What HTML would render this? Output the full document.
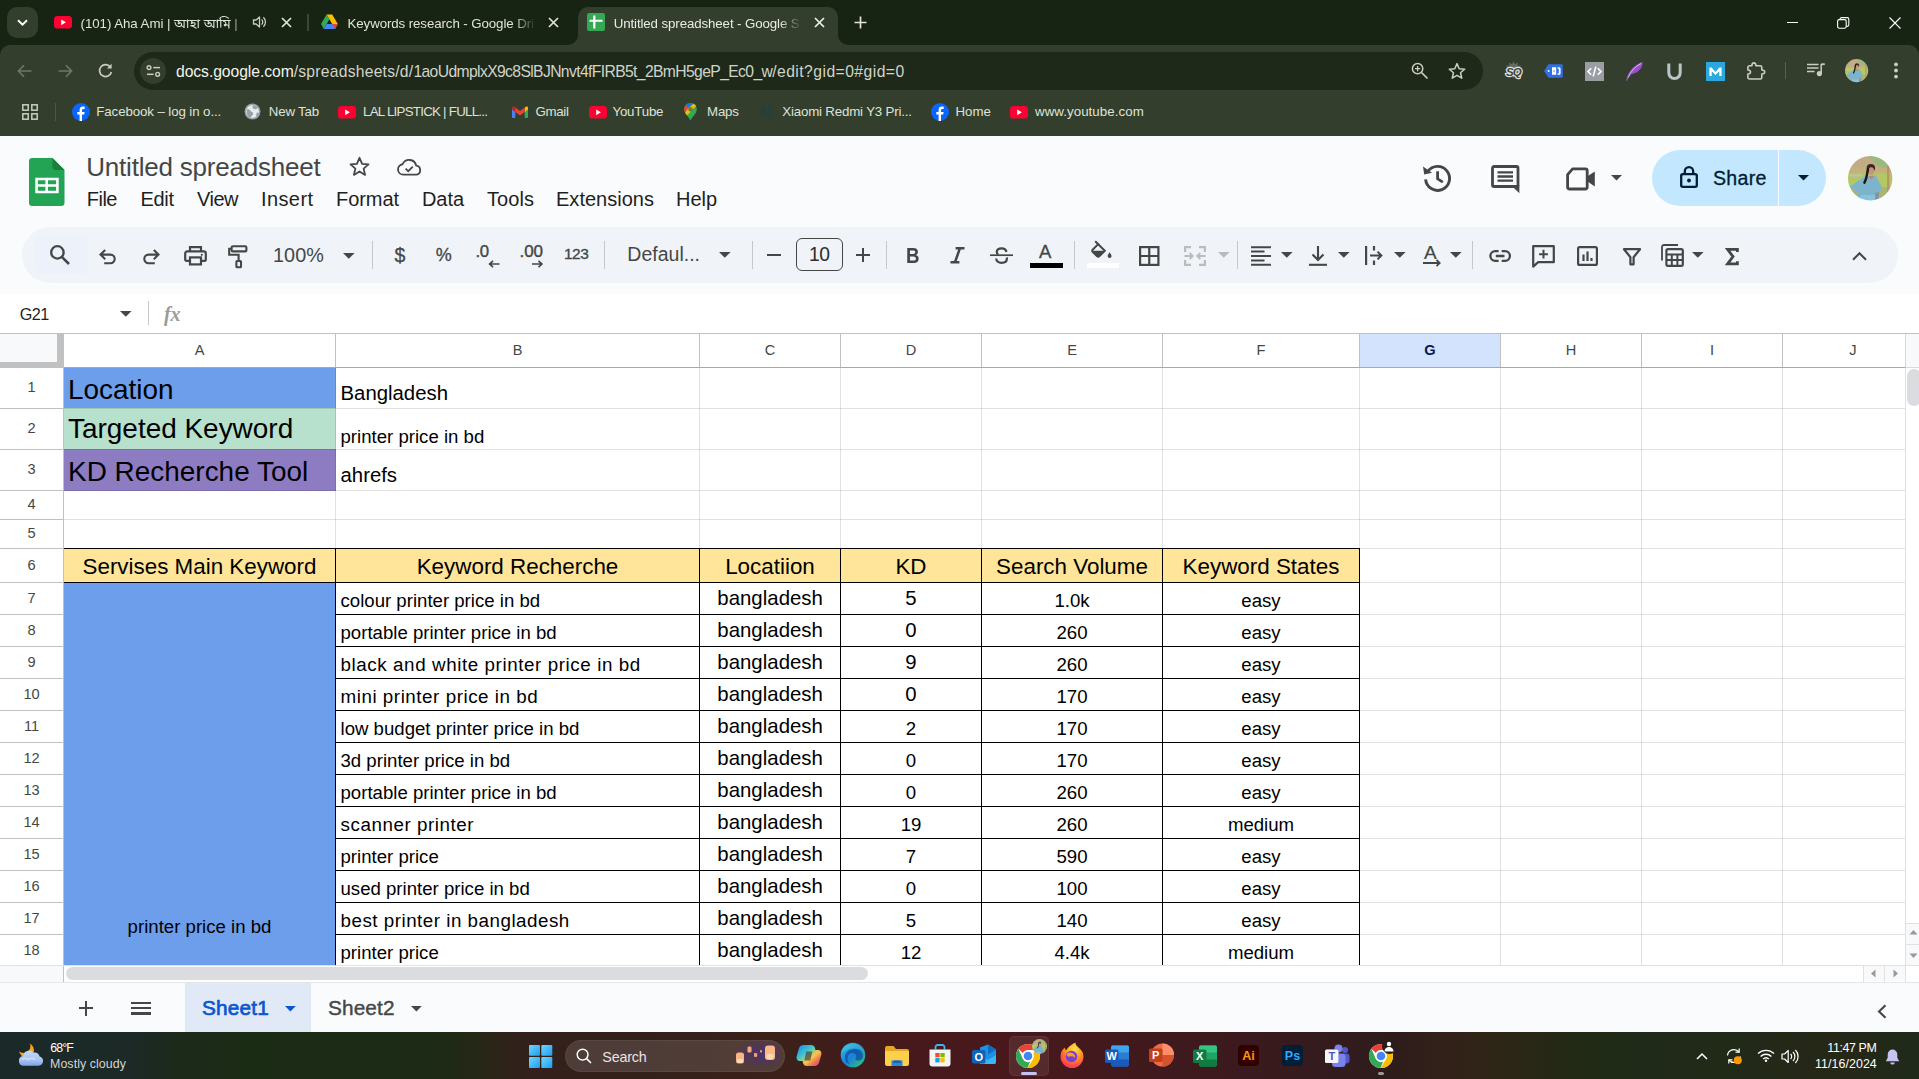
<!DOCTYPE html>
<html lang="en"><head><meta charset="utf-8"><title>Untitled spreadsheet - Google Sheets</title>
<style>
html,body{margin:0;padding:0;}
body{width:1919px;height:1079px;overflow:hidden;position:relative;background:#fff;font-family:"Liberation Sans",sans-serif;color:#000;}
.t{position:absolute;white-space:nowrap;font-family:"Liberation Sans",sans-serif;}
.b{position:absolute;display:block;}
svg{overflow:visible;}
</style></head><body>
<div id="chrome">
<div class="b" style="left:0px;top:0px;width:1919px;height:136px;background:#182413;"></div>
<div class="b" style="left:0px;top:45px;width:1919px;height:91px;background:#343e2d;border-radius:10px 10px 0 0;"></div>
<div class="b" style="left:7px;top:7px;width:31px;height:31px;background:#343e2d;border-radius:10px;"></div>
<svg class="b" style="left:16px;top:17px;" width="13" height="11" viewBox="0 0 13 11"><path d="M2 3.2L6.5 7.7L11 3.2" fill="none" stroke="#fff" stroke-width="2"/></svg>
<svg class="b" style="left:54px;top:15.5px;" width="18" height="12.6" viewBox="0 0 18 12.6"><rect x="0" y="0" width="18" height="12.6" rx="3.4" fill="#ff0033"/><path d="M7.2 3.4L11.9 6.3L7.2 9.2Z" fill="#fff"/></svg>
<div class="t" style="left:80.5px;top:15.00px;font-size:13.3px;line-height:17px;color:#dfe3d9;width:162px;overflow:hidden;letter-spacing:-0.05px;-webkit-mask-image:linear-gradient(90deg,#000 93%,transparent 100%);font-family:'Liberation Sans','Noto Sans Bengali',sans-serif;">(101) Aha Ami | আহা আমি |</div>
<svg class="b" style="left:252px;top:15px;" width="15" height="14" viewBox="0 0 15 14"><path d="M1.5 5h2.6l3.4-3v10l-3.4-3H1.5z" fill="none" stroke="#c9cec3" stroke-width="1.3" stroke-linejoin="round"/><path d="M9.6 4.4a3.6 3.6 0 0 1 0 5.2M11.4 2.3a6.4 6.4 0 0 1 0 9.4" fill="none" stroke="#c9cec3" stroke-width="1.3"/></svg>
<svg class="b" style="left:280.5px;top:17px;" width="11" height="11" viewBox="0 0 11 11"><path d="M1 1L10 10M10 1L1 10" stroke="#dfe3d9" stroke-width="1.7" fill="none"/></svg>
<div class="b" style="left:306.5px;top:14px;width:2px;height:17px;background:#3b4637;"></div>
<svg class="b" style="left:320.5px;top:14.3px;" width="17" height="15.2" viewBox="0 0 17 15.2"><path d="M5.6 0.5h5.6l5.6 9.6h-5.6z" fill="#fbbc04"/><path d="M5.6 0.5L0 10.1l2.8 4.8 5.6-9.6z" fill="#34a853"/><path d="M2.8 14.9h11.2l2.8-4.8H5.6z" fill="#4285f4"/><path d="M14 14.9l2.8-4.8h-5.6z" fill="#ea4335"/></svg>
<div class="t" style="left:347.5px;top:15.00px;font-size:13.3px;line-height:17px;color:#dfe3d9;letter-spacing:-0.094px;width:188px;overflow:hidden;-webkit-mask-image:linear-gradient(90deg,#000 88%,transparent 100%);">Keywords research - Google Dri</div>
<svg class="b" style="left:547.5px;top:17px;" width="11" height="11" viewBox="0 0 11 11"><path d="M1 1L10 10M10 1L1 10" stroke="#dfe3d9" stroke-width="1.7" fill="none"/></svg>
<div class="b" style="left:578px;top:7px;width:260px;height:40px;background:#343e2d;border-radius:10px 10px 0 0;"></div>
<svg class="b" style="left:568px;top:35px;" width="10" height="10" viewBox="0 0 10 10"><path d="M10 0V10H0A10 10 0 0 0 10 0Z" fill="#343e2d"/></svg>
<svg class="b" style="left:838px;top:35px;" width="10" height="10" viewBox="0 0 10 10"><path d="M0 0V10H10A10 10 0 0 1 0 0Z" fill="#343e2d"/></svg>
<svg class="b" style="left:587px;top:13px;" width="18" height="18" viewBox="0 0 18 18"><rect width="18" height="18" rx="2" fill="#34a853"/><path d="M6.2 2.5h2.2v4.2H15.5v2.1H8.4v6.7H6.2V8.8H2.5V6.7h3.7z" fill="#fff"/></svg>
<div class="t" style="left:613.7px;top:15.00px;font-size:13.3px;line-height:17px;color:#e9ecE4;letter-spacing:-0.109px;width:188px;overflow:hidden;-webkit-mask-image:linear-gradient(90deg,#000 88%,transparent 100%);">Untitled spreadsheet - Google S</div>
<svg class="b" style="left:814.3px;top:17px;" width="11" height="11" viewBox="0 0 11 11"><path d="M1 1L10 10M10 1L1 10" stroke="#eef0ea" stroke-width="1.7" fill="none"/></svg>
<svg class="b" style="left:853.5px;top:16px;" width="13" height="13" viewBox="0 0 13 13"><path d="M6.5 0.5v12M0.5 6.5h12" stroke="#dfe3d9" stroke-width="1.7" fill="none"/></svg>
<div class="b" style="left:1787px;top:22px;width:11px;height:1px;background:#fff;"></div>
<svg class="b" style="left:1837px;top:16.5px;" width="12.5" height="12" viewBox="0 0 12.5 12"><rect x="0.6" y="2.6" width="8.6" height="8.6" rx="1.6" fill="none" stroke="#fff" stroke-width="1.1"/><path d="M3 2.4V2.2A1.6 1.6 0 0 1 4.6 0.6h5.6a1.6 1.6 0 0 1 1.6 1.6v5.6a1.6 1.6 0 0 1-1.6 1.6h-0.8" fill="none" stroke="#fff" stroke-width="1.1"/></svg>
<svg class="b" style="left:1889px;top:17px;" width="12" height="12" viewBox="0 0 12 12"><path d="M0.5 0.5L11.5 11.5M11.5 0.5L0.5 11.5" stroke="#fff" stroke-width="1.1" fill="none"/></svg>
<svg class="b" style="left:17px;top:63.5px;" width="15" height="14" viewBox="0 0 15 14"><path d="M14.5 7H1.8M7 1.2L1.4 7L7 12.8" fill="none" stroke="#6d7868" stroke-width="1.6"/></svg>
<svg class="b" style="left:57.5px;top:63.5px;" width="15" height="14" viewBox="0 0 15 14"><path d="M0.5 7H13.2M8 1.2L13.6 7L8 12.8" fill="none" stroke="#6d7868" stroke-width="1.6"/></svg>
<svg class="b" style="left:98px;top:63px;" width="15" height="15" viewBox="0 0 15 15"><path d="M12.6 4.3A6 6 0 1 0 13.4 9" fill="none" stroke="#c9cec3" stroke-width="1.7"/><path d="M13.6 0.8V5.4H9z" fill="#c9cec3"/></svg>
<div class="b" style="left:134px;top:52px;width:1349px;height:38px;background:#1e2919;border-radius:19px;"></div>
<div class="b" style="left:140px;top:58px;width:26px;height:26px;background:#343e2d;border-radius:13px;"></div>
<svg class="b" style="left:145.5px;top:65px;" width="15" height="12" viewBox="0 0 15 12"><circle cx="3" cy="2.6" r="1.9" fill="none" stroke="#c9cec3" stroke-width="1.4"/><path d="M7.3 2.6H14" stroke="#c9cec3" stroke-width="1.5"/><circle cx="11.6" cy="9.3" r="1.9" fill="none" stroke="#c9cec3" stroke-width="1.4"/><path d="M1 9.3H7.6" stroke="#c9cec3" stroke-width="1.5"/></svg>
<div class="t" style="left:176px;top:62.00px;font-size:15.7px;line-height:20px;color:#d0d4ca;"><span style="color:#f1f4ec;letter-spacing:-0.06px">docs.google.com</span><span style="color:#d0d4ca;letter-spacing:0.233px">/spreadsheets/d/</span><span style="color:#d0d4ca;letter-spacing:-0.625px">1aoUdmplxX9c8SlBJNnvt4fFIRB5t_2BmH5geP_Ec0_w</span><span style="color:#d0d4ca;letter-spacing:0.45px">/edit?gid=0#gid=0</span></div>
<svg class="b" style="left:1411px;top:62px;" width="18" height="18" viewBox="0 0 18 18"><circle cx="6.6" cy="6.6" r="5.2" fill="none" stroke="#c9cec3" stroke-width="1.5"/><path d="M10.5 10.5L16.5 16.5" stroke="#c9cec3" stroke-width="1.7"/><path d="M6.6 4v5.2M4 6.6h5.2" stroke="#c9cec3" stroke-width="1.3"/></svg>
<svg class="b" style="left:1447.5px;top:61.5px;" width="18" height="18" viewBox="0 0 18 18"><path d="M9 1.6l2.2 5.1 5.5.5-4.2 3.6 1.3 5.4L9 13.3l-4.8 2.9 1.3-5.4L1.3 7.2l5.5-.5z" fill="none" stroke="#c9cec3" stroke-width="1.5" stroke-linejoin="round"/></svg>
<svg class="b" style="left:1503px;top:61px;" width="21" height="20" viewBox="0 0 21 20"><path d="M10.5 0l1.4 3.2 3-1.8-.3 3.4 3.4-.3-1.8 3 3.2 1.4-3.2 1.4 1.8 3-3.4-.3.3 3.4-3-1.8-1.4 3.2-1.4-3.2-3 1.8.3-3.4-3.4.3 1.8-3L1.6 8.9l3.2-1.4-1.8-3 3.4.3-.3-3.4 3 1.8z" fill="#8a8f86" opacity="0.55"/><text x="10.5" y="15" font-family="Liberation Sans,sans-serif" font-size="11.5" font-weight="bold" font-style="italic" text-anchor="middle" fill="#3c4239" stroke="#e4e6e0" stroke-width="2.4" paint-order="stroke" letter-spacing="-0.8">SQ</text></svg>
<svg class="b" style="left:1544px;top:64px;" width="19" height="14" viewBox="0 0 19 14"><path d="M0 7L4.5 0.3H17.6a1.2 1.2 0 0 1 1.2 1.2v11a1.2 1.2 0 0 1-1.2 1.2H4.5z" fill="#2f6fe4"/><circle cx="4.6" cy="7" r="1" fill="#fff"/><path d="M8 3.2h4.2v7.6H8zM9.6 6.3h1v1.4h-1z" fill="#fff" fill-rule="evenodd"/><path d="M13.6 3.2h1.4a1.6 1.6 0 0 1 1.6 1.6v4.4a1.6 1.6 0 0 1-1.6 1.6h-1.4v-1.5h1.2V4.7h-1.2z" fill="#fff"/></svg>
<svg class="b" style="left:1585px;top:62px;" width="19" height="19" viewBox="0 0 19 19"><rect width="19" height="19" fill="#9a9da3"/><path d="M6.2 6.2L3 9.5l3.2 3.3M12.8 6.2L16 9.5l-3.2 3.3M10.8 4.6L8.2 14.4" fill="none" stroke="#fff" stroke-width="1.6"/></svg>
<svg class="b" style="left:1625px;top:61px;" width="19" height="20" viewBox="0 0 19 20"><path d="M1 19.5C3 12 7 5 17.5 0.8C17.8 6 15 11.5 5.5 13.6L2 19.8z" fill="#9b4fd0"/><path d="M3.2 16.5C6 10 10 5.5 16 2.5" stroke="#d9b6f2" stroke-width="1" fill="none"/></svg>
<svg class="b" style="left:1667px;top:63px;" width="15" height="17" viewBox="0 0 15 17"><path d="M1.8 0.5v9.3a5.7 5.7 0 0 0 11.4 0V0.5" fill="none" stroke="#b9c6c8" stroke-width="3"/></svg>
<svg class="b" style="left:1706px;top:62px;" width="19" height="19" viewBox="0 0 19 19"><rect width="19" height="19" fill="#2ba8e0"/><path d="M3.4 14V5.4h2.2l3.9 4.6 3.9-4.6h2.2V14h-2.3V9.2L9.5 13 5.7 9.2V14z" fill="#fff"/></svg>
<svg class="b" style="left:1746px;top:60.5px;" width="20" height="19" viewBox="0 0 20 19"><path d="M3.5 4.8H5.9a2 2.9 0 0 1 4 0H14.2a1.6 1.6 0 0 1 1.6 1.6V9a2.9 2 0 0 1 0 4V16.4a1.6 1.6 0 0 1-1.6 1.6H3.5A1.6 1.6 0 0 1 1.9 16.4V13a2.6 2 0 0 0 0-4V6.4A1.6 1.6 0 0 1 3.5 4.8z" fill="none" stroke="#c9cec3" stroke-width="1.6" stroke-linejoin="round"/></svg>
<div class="b" style="left:1784.5px;top:62px;width:1.5px;height:17px;background:#566151;"></div>
<svg class="b" style="left:1807px;top:63px;" width="18" height="14" viewBox="0 0 18 14"><path d="M0 1.6h11.5M0 5.1h11.5M0 8.6h7.5" stroke="#c9cec3" stroke-width="1.5"/><path d="M14.2 1v9.4" stroke="#c9cec3" stroke-width="1.5"/><path d="M14.2 1.2h3.6" stroke="#c9cec3" stroke-width="1.8"/><circle cx="12.4" cy="10.6" r="2.6" fill="#c9cec3"/></svg>
<svg class="b" style="left:1845px;top:59px;" width="23.2" height="23.2" viewBox="0 0 100 100"><defs><clipPath id="ca1"><circle cx="50" cy="50" r="50"/></clipPath><filter id="fa1" x="-10%" y="-10%" width="120%" height="120%"><feGaussianBlur stdDeviation="1.6"/></filter></defs><g clip-path="url(#ca1)"><g filter="url(#fa1)"><rect x="-5" y="-5" width="110" height="110" fill="#b2c06a"/><rect x="-5" y="-5" width="110" height="38" fill="#c3ab86"/><path d="M40 -5H105V30H75z" fill="#9db87d"/><rect x="-5" y="26" width="110" height="12" fill="#c4b07c"/><rect x="-5" y="38" width="110" height="34" fill="#b3c765"/><rect x="-5" y="70" width="110" height="35" fill="#a9b574"/><rect x="88" y="22" width="5" height="75" fill="#b8936a"/><rect x="2" y="42" width="30" height="4" fill="#c9b8c9"/><path d="M39 45L63 44 76 70 73 78 66 105H24L22 82 4 70 20 58z" fill="#7db3cc"/><path d="M28 88H68L66 105H26z" fill="#86c3e0"/><path d="M62 82H70L68 105H60z" fill="#8d8f96"/><ellipse cx="51.5" cy="27" rx="9.5" ry="9" fill="#3a282b"/><ellipse cx="52.5" cy="34" rx="6.2" ry="8.5" fill="#c8957c"/><path d="M45 30C42 40 44 48 37 60" fill="none" stroke="#1f1718" stroke-width="5.5" stroke-linecap="round"/><path d="M47 45H58L55 52H50z" fill="#b98772"/></g></g></svg>
<svg class="b" style="left:1893px;top:62px;" width="6" height="17" viewBox="0 0 6 17"><circle cx="3" cy="2.4" r="1.9" fill="#c9cec3"/><circle cx="3" cy="8.5" r="1.9" fill="#c9cec3"/><circle cx="3" cy="14.6" r="1.9" fill="#c9cec3"/></svg>
<svg class="b" style="left:21.5px;top:103.5px;" width="16" height="16" viewBox="0 0 16 16"><rect x="0.8" y="0.8" width="5.4" height="5.4" fill="none" stroke="#c9cec3" stroke-width="1.5"/><rect x="9.8" y="0.8" width="5.4" height="5.4" fill="none" stroke="#c9cec3" stroke-width="1.5"/><rect x="0.8" y="9.8" width="5.4" height="5.4" fill="none" stroke="#c9cec3" stroke-width="1.5"/><rect x="9.8" y="9.8" width="5.4" height="5.4" fill="none" stroke="#c9cec3" stroke-width="1.5"/></svg>
<div class="b" style="left:54.5px;top:103px;width:1.5px;height:18px;background:#4b5646;"></div>
<svg class="b" style="left:71.8px;top:103px;" width="18" height="18" viewBox="0 0 18 18"><circle cx="9" cy="9" r="9" fill="#0866ff"/><path d="M10 18v-6.4h2.2l.4-2.6H10V7.4c0-.8.3-1.4 1.5-1.4h1.2V3.7C12.4 3.6 11.7 3.5 10.9 3.5 8.9 3.5 7.6 4.7 7.6 6.9V9H5.3v2.6h2.3V18z" fill="#fff"/></svg>
<div class="t" style="left:96.3px;top:103.00px;font-size:13.3px;line-height:17px;color:#dfe3d9;letter-spacing:-0.103px;">Facebook – log in o...</div>
<svg class="b" style="left:244px;top:103px;" width="17" height="17" viewBox="0 0 17 17"><circle cx="8.5" cy="8.5" r="8" fill="#9aa0a6"/><circle cx="8.5" cy="8.5" r="6.4" fill="#e8eaed"/><path d="M3 6.5c1.5-.5 3 .2 3.6 1.5.5 1 1.8.8 2.4 1.8.5.9-.3 2.2-1.2 2.9-1 .800-1 2-1.6 2.1C3.8 13.8 2 10.8 3 6.5zM9 2.3c1.8-.4 4 .7 5 2.6-1 .2-1.4 1.2-2.6 1.3-1.3.1-2.6-.6-2.9-1.7-.2-.8-.1-1.5.5-2.2zM13 9.5c.8-.3 1.6.1 2 .9-.3 1.5-1.2 2.8-2.4 3.6-.5-1.2-.6-3.6.4-4.5z" fill="#9aa0a6"/></svg>
<div class="t" style="left:268.8px;top:103.00px;font-size:13.3px;line-height:17px;color:#dfe3d9;letter-spacing:-0.184px;">New Tab</div>
<svg class="b" style="left:338px;top:105.5px;" width="18" height="12.6" viewBox="0 0 18 12.6"><rect x="0" y="0" width="18" height="12.6" rx="3.4" fill="#ff0033"/><path d="M7.2 3.4L11.9 6.3L7.2 9.2Z" fill="#fff"/></svg>
<div class="t" style="left:363px;top:103.00px;font-size:13.3px;line-height:17px;color:#dfe3d9;letter-spacing:-0.736px;">LAL LIPSTICK | FULL...</div>
<svg class="b" style="left:512px;top:106px;" width="16" height="12" viewBox="0 0 16 12"><path d="M0 1.8V11a1 1 0 0 0 1 1h2.3V5.6z" fill="#4285f4"/><path d="M12.7 12H15a1 1 0 0 0 1-1V1.8l-3.3 3.8z" fill="#34a853"/><path d="M0 1.8v1.7l3.3 2.5V1.6L2.4.9C1.4.1 0 .8 0 1.8z" fill="#c5221f"/><path d="M16 1.8v1.7l-3.3 2.5V1.6l.9-.7c1-.8 2.4-.1 2.4.9z" fill="#fbbc04"/><path d="M3.3 6V1.6L8 5.1l4.7-3.5V6L8 9.5z" fill="#ea4335"/></svg>
<div class="t" style="left:535.4px;top:103.00px;font-size:13.3px;line-height:17px;color:#dfe3d9;letter-spacing:-0.283px;">Gmail</div>
<svg class="b" style="left:589px;top:105.5px;" width="18" height="12.6" viewBox="0 0 18 12.6"><rect x="0" y="0" width="18" height="12.6" rx="3.4" fill="#ff0033"/><path d="M7.2 3.4L11.9 6.3L7.2 9.2Z" fill="#fff"/></svg>
<div class="t" style="left:612.5px;top:103.00px;font-size:13.3px;line-height:17px;color:#dfe3d9;letter-spacing:-0.211px;">YouTube</div>
<svg class="b" style="left:684px;top:103px;" width="13" height="17.7" viewBox="0 0 13 17.7"><path d="M6.5 0C3 0 .2 2.8.2 6.3c0 4.4 5 7.8 6.3 11.4C7.8 14.1 12.8 10.7 12.8 6.3 12.8 2.8 10 0 6.5 0z" fill="#34a853"/><path d="M6.5 0C4.6 0 2.9.8 1.7 2.2l3 2.5L9.6.7C8.7.3 7.6 0 6.5 0z" fill="#1a73e8"/><path d="M1.7 2.2C.8 3.3.2 4.7.2 6.3c0 1.2.3 2.3.9 3.3l3.6-4.9z" fill="#ea4335"/><path d="M9.6.7L4.7 4.7 1.1 9.6c.5 1 1.2 1.9 2 2.8l9.1-9.3C11.6 2.1 10.7 1.2 9.6.7z" fill="#fbbc04" opacity="0.95"/><circle cx="6.5" cy="6.3" r="2.3" fill="#fff" opacity="0.0"/><circle cx="6.5" cy="6.2" r="2.2" fill="#1a3a6b" opacity="0.55"/></svg>
<div class="t" style="left:707px;top:103.00px;font-size:13.3px;line-height:17px;color:#dfe3d9;letter-spacing:-0.174px;">Maps</div>
<div class="t" style="left:760px;top:100.61px;font-size:17px;line-height:22px;color:#22403f;font-weight:bold;transform:scaleX(0.9);transform-origin:0 0;">M</div>
<div class="t" style="left:782.3px;top:103.00px;font-size:13.3px;line-height:17px;color:#dfe3d9;letter-spacing:-0.183px;">Xiaomi Redmi Y3 Pri...</div>
<svg class="b" style="left:930.8px;top:103px;" width="18" height="18" viewBox="0 0 18 18"><circle cx="9" cy="9" r="9" fill="#0866ff"/><path d="M10 18v-6.4h2.2l.4-2.6H10V7.4c0-.8.3-1.4 1.5-1.4h1.2V3.7C12.4 3.6 11.7 3.5 10.9 3.5 8.9 3.5 7.6 4.7 7.6 6.9V9H5.3v2.6h2.3V18z" fill="#fff"/></svg>
<div class="t" style="left:955.4px;top:103.00px;font-size:13.3px;line-height:17px;color:#dfe3d9;letter-spacing:0.041px;">Home</div>
<svg class="b" style="left:1010px;top:105.5px;" width="18" height="12.6" viewBox="0 0 18 12.6"><rect x="0" y="0" width="18" height="12.6" rx="3.4" fill="#ff0033"/><path d="M7.2 3.4L11.9 6.3L7.2 9.2Z" fill="#fff"/></svg>
<div class="t" style="left:1035px;top:103.00px;font-size:13.3px;line-height:17px;color:#dfe3d9;letter-spacing:0.059px;">www.youtube.com</div>
</div>
<div id="sheets">
<div class="b" style="left:0px;top:136px;width:1919px;height:158px;background:#f9fbfd;"></div>
<div class="b" style="left:0px;top:294px;width:1919px;height:40px;background:#fff;"></div>
<svg class="b" style="left:29.3px;top:158px;" width="35.5" height="48" viewBox="0 0 35.5 48"><path d="M3.2 0H23.5L35.5 12V44.8a3.2 3.2 0 0 1-3.2 3.2H3.2A3.2 3.2 0 0 1 0 44.8V3.2A3.2 3.2 0 0 1 3.2 0z" fill="#23a455"/><path d="M23.5 0L35.5 12H26.5a3 3 0 0 1-3-3z" fill="#16803c"/><path d="M6.3 19.8h23.4v15.4H6.3zM8.9 22.3v3.9h7.5v-3.9zM19 22.3v3.9h8.1v-3.9zM8.9 28.8v3.9h7.5v-3.9zM19 28.8v3.9h8.1v-3.9z" fill="#fff" fill-rule="evenodd"/></svg>
<div class="t" style="left:86.3px;top:150.00px;font-size:26px;line-height:34px;color:#444746;letter-spacing:-0.215px;">Untitled spreadsheet</div>
<svg class="b" style="left:348.5px;top:156px;" width="21" height="20" viewBox="0 0 21 20"><path d="M10.5 1.8l2.6 6 6.4.6-4.9 4.2 1.5 6.3-5.6-3.4-5.6 3.4 1.5-6.3L1.5 8.4l6.4-.6z" fill="none" stroke="#444746" stroke-width="1.8" stroke-linejoin="round"/></svg>
<svg class="b" style="left:397px;top:159px;" width="25" height="17" viewBox="0 0 25 17"><path d="M6.2 15.6a5.2 5.2 0 0 1-.6-10.36A7.2 7.2 0 0 1 19.2 6.6a4.6 4.6 0 0 1 .6 9z" fill="none" stroke="#444746" stroke-width="1.8" stroke-linejoin="round"/><path d="M8.6 9.6l2.6 2.6 4.6-4.6" fill="none" stroke="#444746" stroke-width="1.7"/></svg>
<div class="t" style="left:86.8px;top:186.00px;font-size:20px;line-height:26px;color:#1f1f1f;letter-spacing:-0.509px;">File</div>
<div class="t" style="left:140.5px;top:186.00px;font-size:20px;line-height:26px;color:#1f1f1f;letter-spacing:-0.321px;">Edit</div>
<div class="t" style="left:197px;top:186.00px;font-size:20px;line-height:26px;color:#1f1f1f;letter-spacing:-0.496px;">View</div>
<div class="t" style="left:261px;top:186.00px;font-size:20px;line-height:26px;color:#1f1f1f;letter-spacing:0.396px;">Insert</div>
<div class="t" style="left:336px;top:186.00px;font-size:20px;line-height:26px;color:#1f1f1f;letter-spacing:-0.068px;">Format</div>
<div class="t" style="left:422px;top:186.00px;font-size:20px;line-height:26px;color:#1f1f1f;letter-spacing:-0.082px;">Data</div>
<div class="t" style="left:487px;top:186.00px;font-size:20px;line-height:26px;color:#1f1f1f;letter-spacing:0.078px;">Tools</div>
<div class="t" style="left:556px;top:186.00px;font-size:20px;line-height:26px;color:#1f1f1f;letter-spacing:0.019px;">Extensions</div>
<div class="t" style="left:676px;top:186.00px;font-size:20px;line-height:26px;color:#1f1f1f;letter-spacing:-0.044px;">Help</div>
<svg class="b" style="left:1421.5px;top:162.5px;" width="31" height="30.5" viewBox="0 0 31 30.5"><path d="M5.8 8.4A12 12 0 1 1 3.6 16.4" fill="none" stroke="#444746" stroke-width="2.9"/><path d="M1 3.4l1.2 8.2 7.8-1.9z" fill="#444746"/><path d="M15.6 8.2v7.6l5.2 3.4" fill="none" stroke="#444746" stroke-width="2.8"/></svg>
<svg class="b" style="left:1491px;top:164.5px;" width="29" height="29" viewBox="0 0 29 29"><path d="M1.5 3A1.5 1.5 0 0 1 3 1.5H25.5A1.5 1.5 0 0 1 27 3V20A1.5 1.5 0 0 1 25.5 21.5H3A1.5 1.5 0 0 1 1.5 20z" fill="none" stroke="#444746" stroke-width="2.8"/><path d="M28.4 20v8.2l-7.8-7.4z" fill="#444746"/><path d="M6.5 7.4h15.5M6.5 11.5h15.5M6.5 15.6h15.5" stroke="#444746" stroke-width="2.4"/></svg>
<svg class="b" style="left:1566px;top:166.5px;" width="31" height="24" viewBox="0 0 31 24"><path d="M1.6 7.6L6.6 1.8H19.4a1.8 1.8 0 0 1 1.8 1.8V20.2a1.8 1.8 0 0 1-1.8 1.8H3.4a1.8 1.8 0 0 1-1.8-1.8z" fill="none" stroke="#444746" stroke-width="2.8" stroke-linejoin="round"/><path d="M21.2 9.6L28.8 4.4V19.4L21.2 14.2z" fill="#444746"/></svg>
<svg class="b" style="left:1610.5px;top:174.5px;" width="11" height="6" viewBox="0 0 11 6"><path d="M0 0H11L5.5 5.5z" fill="#444746"/></svg>
<div class="b" style="left:1652px;top:150px;width:174px;height:56px;background:#c2e7ff;border-radius:28px;"></div>
<div class="b" style="left:1778px;top:150px;width:1px;height:56px;background:#f9fbfd;"></div>
<svg class="b" style="left:1680px;top:166px;" width="18" height="22" viewBox="0 0 18 22"><rect x="1.2" y="8.2" width="15.6" height="12.6" rx="1.6" fill="none" stroke="#001d35" stroke-width="2.3"/><path d="M4.8 8V5.4a4.2 4.2 0 0 1 8.4 0V8" fill="none" stroke="#001d35" stroke-width="2.3"/><circle cx="9" cy="14.5" r="1.9" fill="#001d35"/></svg>
<div class="t" style="left:1713px;top:165.71px;font-size:19.6px;line-height:25px;color:#001d35;letter-spacing:0.299px;-webkit-text-stroke:0.3px #001d35;">Share</div>
<svg class="b" style="left:1798px;top:174.5px;" width="11" height="6" viewBox="0 0 11 6"><path d="M0 0H11L5.5 5.5z" fill="#001d35"/></svg>
<svg class="b" style="left:1848.3px;top:155.8px;" width="44.4" height="44.4" viewBox="0 0 100 100"><defs><clipPath id="ca2"><circle cx="50" cy="50" r="50"/></clipPath><filter id="fa2" x="-10%" y="-10%" width="120%" height="120%"><feGaussianBlur stdDeviation="1.6"/></filter></defs><g clip-path="url(#ca2)"><g filter="url(#fa2)"><rect x="-5" y="-5" width="110" height="110" fill="#b2c06a"/><rect x="-5" y="-5" width="110" height="38" fill="#c3ab86"/><path d="M40 -5H105V30H75z" fill="#9db87d"/><rect x="-5" y="26" width="110" height="12" fill="#c4b07c"/><rect x="-5" y="38" width="110" height="34" fill="#b3c765"/><rect x="-5" y="70" width="110" height="35" fill="#a9b574"/><rect x="88" y="22" width="5" height="75" fill="#b8936a"/><rect x="2" y="42" width="30" height="4" fill="#c9b8c9"/><path d="M39 45L63 44 76 70 73 78 66 105H24L22 82 4 70 20 58z" fill="#7db3cc"/><path d="M28 88H68L66 105H26z" fill="#86c3e0"/><path d="M62 82H70L68 105H60z" fill="#8d8f96"/><ellipse cx="51.5" cy="27" rx="9.5" ry="9" fill="#3a282b"/><ellipse cx="52.5" cy="34" rx="6.2" ry="8.5" fill="#c8957c"/><path d="M45 30C42 40 44 48 37 60" fill="none" stroke="#1f1718" stroke-width="5.5" stroke-linecap="round"/><path d="M47 45H58L55 52H50z" fill="#b98772"/></g></g></svg>
<div class="b" style="left:22px;top:227px;width:1876px;height:56px;background:#f0f4f9;border-radius:28px;"></div>
<div class="b" style="left:34.5px;top:235px;width:53px;height:39px;background:#edf2fa;border-radius:4px;"></div>
<svg class="b" style="left:50px;top:245px;" width="20" height="19.5" viewBox="0 0 20 19.5"><circle cx="7.4" cy="7.4" r="6.2" fill="none" stroke="#444746" stroke-width="2.3"/><path d="M11.8 11.8L19 19" stroke="#444746" stroke-width="2.5"/></svg>
<svg class="b" style="left:98.5px;top:249px;" width="18" height="16" viewBox="0 0 18 16"><path d="M6.2 1L1.5 5.6 6.2 10.2M2 5.6H11.4a4.3 4.3 0 0 1 0 8.6H5.2" fill="none" stroke="#444746" stroke-width="2.1"/></svg>
<svg class="b" style="left:141.5px;top:249px;transform:scaleX(-1);" width="18" height="16" viewBox="0 0 18 16"><path d="M6.2 1L1.5 5.6 6.2 10.2M2 5.6H11.4a4.3 4.3 0 0 1 0 8.6H5.2" fill="none" stroke="#444746" stroke-width="2.1"/></svg>
<svg class="b" style="left:184px;top:246px;" width="23" height="19.5" viewBox="0 0 23 19.5"><path d="M6 5.2V1.2H17V5.2" fill="none" stroke="#444746" stroke-width="2.2"/><path d="M5.6 14.8H2.6a1.4 1.4 0 0 1-1.4-1.4V7.4A2 2 0 0 1 3.2 5.4H19.8a2 2 0 0 1 2 2v6a1.4 1.4 0 0 1-1.4 1.4H17.4" fill="none" stroke="#444746" stroke-width="2.2"/><rect x="6" y="11.4" width="11" height="7" fill="none" stroke="#444746" stroke-width="2.2"/><circle cx="17.8" cy="8.8" r="1.1" fill="#444746"/></svg>
<svg class="b" style="left:228px;top:245px;" width="20" height="23.5" viewBox="0 0 20 23.5"><rect x="3.6" y="1.2" width="14.8" height="5.2" rx="1.2" fill="none" stroke="#444746" stroke-width="2.1"/><path d="M3.6 3.8H1.2V9.8H10.6V16" fill="none" stroke="#444746" stroke-width="2.1"/><rect x="8.4" y="16" width="4.6" height="6.3" rx="0.8" fill="none" stroke="#444746" stroke-width="2.1"/></svg>
<div class="t" style="left:273px;top:242.14px;font-size:19.8px;line-height:26px;color:#444746;letter-spacing:0.12px;">100%</div>
<svg class="b" style="left:343.4px;top:252.5px;" width="11.6" height="5.8" viewBox="0 0 11.6 5.8"><path d="M0 0H11.6L5.8 5.8z" fill="#444746"/></svg>
<div class="b" style="left:372px;top:241px;width:1px;height:28px;background:#c7c7c7;"></div>
<div class="b" style="left:604px;top:241px;width:1px;height:28px;background:#c7c7c7;"></div>
<div class="b" style="left:752px;top:241px;width:1px;height:28px;background:#c7c7c7;"></div>
<div class="b" style="left:886px;top:241px;width:1px;height:28px;background:#c7c7c7;"></div>
<div class="b" style="left:1074px;top:241px;width:1px;height:28px;background:#c7c7c7;"></div>
<div class="b" style="left:1237px;top:241px;width:1px;height:28px;background:#c7c7c7;"></div>
<div class="b" style="left:1472px;top:241px;width:1px;height:28px;background:#c7c7c7;"></div>
<div class="t" style="left:394.6px;top:242.74px;font-size:19.5px;line-height:25px;color:#444746;-webkit-text-stroke:0.3px #444746;">$</div>
<div class="t" style="left:435.8px;top:244.26px;font-size:18px;line-height:23px;color:#444746;letter-spacing:-0.505px;-webkit-text-stroke:0.3px #444746;">%</div>
<div class="t" style="left:475.5px;top:241.18px;font-size:16.8px;line-height:22px;color:#444746;letter-spacing:-0.511px;-webkit-text-stroke:0.4px #444746;">.0</div>
<svg class="b" style="left:487.5px;top:259.5px;" width="11.5" height="8" viewBox="0 0 11.5 8"><path d="M11.5 4H1.8M5 0.8L1.6 4 5 7.2" fill="none" stroke="#444746" stroke-width="1.7"/></svg>
<div class="t" style="left:519.5px;top:241.11px;font-size:17px;line-height:22px;color:#444746;letter-spacing:-0.066px;-webkit-text-stroke:0.4px #444746;">.00</div>
<svg class="b" style="left:531.5px;top:259.5px;" width="11.5" height="8" viewBox="0 0 11.5 8"><path d="M0 4H9.7M6.5 0.8L9.9 4 6.5 7.2" fill="none" stroke="#444746" stroke-width="1.7"/></svg>
<div class="t" style="left:564px;top:244.23px;font-size:15.5px;line-height:20px;color:#444746;letter-spacing:-0.531px;-webkit-text-stroke:0.35px #444746;">123</div>
<div class="t" style="left:627.3px;top:241.54px;font-size:19.5px;line-height:25px;color:#444746;letter-spacing:0.01px;">Defaul...</div>
<svg class="b" style="left:719.4px;top:251.5px;" width="11.6" height="5.8" viewBox="0 0 11.6 5.8"><path d="M0 0H11.6L5.8 5.8z" fill="#444746"/></svg>
<div class="b" style="left:767px;top:253.5px;width:14px;height:2px;background:#444746;"></div>
<div class="b" style="left:796px;top:238px;width:46.5px;height:32.5px;background:transparent;border:1.2px solid #444746;border-radius:6px;box-sizing:border-box;"></div>
<div class="t" style="left:796px;top:242.41px;font-size:19.3px;line-height:25px;width:46.5px;text-align:center;color:#2d2f2e;letter-spacing:-0.5px;">10</div>
<div class="b" style="left:855.5px;top:253.5px;width:14px;height:2px;background:#444746;"></div>
<div class="b" style="left:861.5px;top:247.5px;width:2px;height:14px;background:#444746;"></div>
<div class="t" style="left:906.3px;top:240.1px;font-size:22.8px;line-height:30px;color:#444746;font-weight:bold;transform:scaleX(0.82);transform-origin:0 50%;">B</div>
<svg class="b" style="left:949.5px;top:247px;" width="15" height="16.5" viewBox="0 0 15 16.5"><path d="M5.6 1.3H14.5M0.5 15.2H9.4M9.9 1.3L5 15.2" fill="none" stroke="#444746" stroke-width="2.5"/></svg>
<svg class="b" style="left:989.5px;top:246.5px;" width="23" height="17" viewBox="0 0 23 17"><path d="M0 8.2H23" stroke="#444746" stroke-width="1.7"/><path d="M16.4 5a4.9 4 0 0 0-9.7-.2c0 1.3.6 2.2 1.6 2.7M6.2 11.6c0 2.4 2.3 4.2 5.4 4.2 3.2 0 5.3-1.7 5.3-4.1 0-.5-.1-.9-.3-1.3" fill="none" stroke="#444746" stroke-width="2.2"/></svg>
<div class="t" style="left:1039px;top:240.09px;font-size:18.5px;line-height:24px;color:#444746;letter-spacing:0.661px;-webkit-text-stroke:0.3px #444746;">A</div>
<div class="b" style="left:1030px;top:263px;width:33px;height:5px;background:#000;"></div>
<div class="b" style="left:1074px;top:241px;width:1px;height:28px;background:#c7c7c7;"></div>
<svg class="b" style="left:1091px;top:239.5px;" width="22" height="19.5" viewBox="0 0 22 19.5"><path d="M4.2 1.2L13.8 10.8 8.2 16.4a1.4 1.4 0 0 1-2 0L1.6 11.8a1.4 1.4 0 0 1 0-2L8 3.4" fill="none" stroke="#444746" stroke-width="2"/><path d="M1.4 10.8H13.8L8.2 16.4a1.4 1.4 0 0 1-2 0z" fill="#444746"/><path d="M18.6 12.2c1.2 1.7 2 2.9 2 3.9a2 2 0 0 1-4 0c0-1 .8-2.2 2-3.9z" fill="#444746"/></svg>
<div class="b" style="left:1087px;top:263px;width:32px;height:5px;background:#fff;"></div>
<svg class="b" style="left:1138.5px;top:245.5px;" width="20.5" height="20" viewBox="0 0 20.5 20"><rect x="1.1" y="1.1" width="18.3" height="17.8" fill="none" stroke="#444746" stroke-width="2.2"/><path d="M10.25 1V19M1 10H19.5" stroke="#444746" stroke-width="2.2"/></svg>
<svg class="b" style="left:1184px;top:245.5px;" width="22" height="20" viewBox="0 0 22 20"><path d="M1.1 6V1.1H7M15 1.1H20.9V6M20.9 14V18.9H15M7 18.9H1.1V14" fill="none" stroke="#b9bcbb" stroke-width="2.2"/><path d="M0.5 10H8.5M5.6 6.8L8.8 10 5.6 13.2M21.5 10H13.5M16.4 6.8L13.2 10 16.4 13.2" fill="none" stroke="#b9bcbb" stroke-width="1.8"/></svg>
<svg class="b" style="left:1218px;top:251.5px;" width="11.6" height="5.8" viewBox="0 0 11.6 5.8"><path d="M0 0H11.6L5.8 5.8z" fill="#b9bcbb"/></svg>
<svg class="b" style="left:1251px;top:245.5px;" width="20" height="20" viewBox="0 0 20 20"><path d="M0 1.2H20M0 5.6H13.5M0 10H20M0 14.4H13.5M0 18.8H20" stroke="#444746" stroke-width="2"/></svg>
<svg class="b" style="left:1280.6px;top:251.5px;" width="11.6" height="5.8" viewBox="0 0 11.6 5.8"><path d="M0 0H11.6L5.8 5.8z" fill="#444746"/></svg>
<svg class="b" style="left:1309px;top:245.5px;" width="18" height="20" viewBox="0 0 18 20"><path d="M9 0V13.5M3.5 8.4L9 13.9 14.5 8.4" fill="none" stroke="#444746" stroke-width="2.1"/><path d="M0 18.8H18" stroke="#444746" stroke-width="2.1"/></svg>
<svg class="b" style="left:1337.5px;top:251.5px;" width="11.6" height="5.8" viewBox="0 0 11.6 5.8"><path d="M0 0H11.6L5.8 5.8z" fill="#444746"/></svg>
<svg class="b" style="left:1365px;top:246px;" width="18" height="19" viewBox="0 0 18 19"><path d="M1.1 0V19" stroke="#444746" stroke-width="2.2"/><path d="M9 0V4.5M9 14.5V19" stroke="#444746" stroke-width="2.2"/><path d="M5 9.5H16M12.5 5.6L16.4 9.5 12.5 13.4" fill="none" stroke="#444746" stroke-width="2"/></svg>
<svg class="b" style="left:1393.8px;top:251.5px;" width="11.6" height="5.8" viewBox="0 0 11.6 5.8"><path d="M0 0H11.6L5.8 5.8z" fill="#444746"/></svg>
<div class="t" style="left:1424px;top:240.42px;font-size:19px;line-height:25px;color:#444746;-webkit-text-stroke:0.2px #444746;">A</div>
<svg class="b" style="left:1422.5px;top:258.5px;" width="18.5" height="8" viewBox="0 0 18.5 8"><path d="M0 4H16.5M13.5 0.8L16.7 4 13.5 7.2" fill="none" stroke="#444746" stroke-width="1.8"/></svg>
<svg class="b" style="left:1450.4px;top:251.5px;" width="11.6" height="5.8" viewBox="0 0 11.6 5.8"><path d="M0 0H11.6L5.8 5.8z" fill="#444746"/></svg>
<svg class="b" style="left:1488.5px;top:250px;" width="22.3" height="12" viewBox="0 0 22.3 12"><path d="M9.6 1.2H6.2a4.8 4.8 0 0 0 0 9.6H9.6M12.7 1.2h3.4a4.8 4.8 0 0 1 0 9.6H12.7M6.8 6H15.5" fill="none" stroke="#444746" stroke-width="2.3"/></svg>
<svg class="b" style="left:1532px;top:244.5px;" width="23" height="22.5" viewBox="0 0 23 22.5"><path d="M1.2 1.2H21.8V17.2H6.2L1.2 21.6z" fill="none" stroke="#444746" stroke-width="2.2" stroke-linejoin="round"/><path d="M11.5 4.8V13.6M7.1 9.2H15.9" stroke="#444746" stroke-width="2"/></svg>
<svg class="b" style="left:1577px;top:245.5px;" width="21" height="20" viewBox="0 0 21 20"><rect x="1.1" y="1.1" width="18.8" height="17.8" rx="1.5" fill="none" stroke="#444746" stroke-width="2.2"/><path d="M6.5 15V8.5M10.5 15V5.5M14.5 15V12" stroke="#444746" stroke-width="2.2"/></svg>
<svg class="b" style="left:1623px;top:247.5px;" width="18" height="17.5" viewBox="0 0 18 17.5"><path d="M1 1.2H17L10.6 9.2V16.3H7.4V9.2z" fill="none" stroke="#444746" stroke-width="2.2" stroke-linejoin="round"/></svg>
<svg class="b" style="left:1660.5px;top:244px;" width="23" height="23" viewBox="0 0 23 23"><path d="M1 16.5V3a2 2 0 0 1 2-2H17" fill="none" stroke="#444746" stroke-width="1.8"/><rect x="5.4" y="5.2" width="16.4" height="16.6" rx="1.6" fill="none" stroke="#444746" stroke-width="2.2"/><path d="M5.4 10.4H21.8M5.4 16H21.8M10.8 10.4V21.8M16.4 10.4V21.8" stroke="#444746" stroke-width="2"/></svg>
<svg class="b" style="left:1692px;top:251.5px;" width="11.6" height="5.8" viewBox="0 0 11.6 5.8"><path d="M0 0H11.6L5.8 5.8z" fill="#444746"/></svg>
<svg class="b" style="left:1726.3px;top:247.5px;" width="12.2" height="17.2" viewBox="0 0 12.2 17.2"><path d="M11.4 4V1.4H1.6L7 8.6 1.6 15.8H11.4V13.2" fill="none" stroke="#444746" stroke-width="2.8" stroke-linejoin="miter"/></svg>
<svg class="b" style="left:1852px;top:251px;" width="15" height="10" viewBox="0 0 15 10"><path d="M1 8.8L7.5 2.3 14 8.8" fill="none" stroke="#444746" stroke-width="2.1"/></svg>
<div class="t" style="left:19.8px;top:303.89px;font-size:16.2px;line-height:21px;color:#1f1f1f;letter-spacing:-0.56px;">G21</div>
<svg class="b" style="left:119.7px;top:311px;" width="11.6" height="5.8" viewBox="0 0 11.6 5.8"><path d="M0 0H11.6L5.8 5.8z" fill="#444746"/></svg>
<div class="b" style="left:147.5px;top:301px;width:1px;height:24px;background:#c7c7c7;"></div>
<div class="t" style="left:164px;top:301.07px;font-size:20px;line-height:26px;color:#9a9d9b;font-family:'Liberation Serif',serif;font-style:italic;font-weight:bold;letter-spacing:-0.2px;">fx</div>
</div>
<div id="grid">
<div class="b" style="left:0px;top:334px;width:1919px;height:631px;background:#fff;"></div>
<div class="b" style="left:0px;top:333px;width:1919px;height:1px;background:#c0c0c0;"></div>
<div class="b" style="left:0px;top:334px;width:57px;height:28px;background:#f8f9fa;"></div>
<div class="b" style="left:57px;top:334px;width:7px;height:34px;background:#c1c1c1;"></div>
<div class="b" style="left:0px;top:362px;width:64px;height:6px;background:#c1c1c1;"></div>
<div class="b" style="left:1360px;top:334px;width:140px;height:33px;background:#d3e3fd;"></div>
<div class="b" style="left:64px;top:367px;width:1842px;height:1px;background:#c0c0c0;"></div>
<div class="b" style="left:335px;top:334px;width:1px;height:34px;background:#c0c0c0;"></div>
<div class="b" style="left:699px;top:334px;width:1px;height:34px;background:#c0c0c0;"></div>
<div class="b" style="left:840px;top:334px;width:1px;height:34px;background:#c0c0c0;"></div>
<div class="b" style="left:981px;top:334px;width:1px;height:34px;background:#c0c0c0;"></div>
<div class="b" style="left:1162px;top:334px;width:1px;height:34px;background:#c0c0c0;"></div>
<div class="b" style="left:1359px;top:334px;width:1px;height:34px;background:#c0c0c0;"></div>
<div class="b" style="left:1500px;top:334px;width:1px;height:34px;background:#c0c0c0;"></div>
<div class="b" style="left:1641px;top:334px;width:1px;height:34px;background:#c0c0c0;"></div>
<div class="b" style="left:1782px;top:334px;width:1px;height:34px;background:#c0c0c0;"></div>
<div class="b" style="left:1905px;top:334px;width:1px;height:34px;background:#c0c0c0;"></div>
<div class="b" style="left:63px;top:368px;width:1px;height:597px;background:#c0c0c0;"></div>
<div class="b" style="left:0px;top:408px;width:64px;height:1px;background:#c0c0c0;"></div>
<div class="b" style="left:0px;top:449px;width:64px;height:1px;background:#c0c0c0;"></div>
<div class="b" style="left:0px;top:490px;width:64px;height:1px;background:#c0c0c0;"></div>
<div class="b" style="left:0px;top:519px;width:64px;height:1px;background:#c0c0c0;"></div>
<div class="b" style="left:0px;top:548px;width:64px;height:1px;background:#c0c0c0;"></div>
<div class="b" style="left:0px;top:582px;width:64px;height:1px;background:#c0c0c0;"></div>
<div class="b" style="left:0px;top:614px;width:64px;height:1px;background:#c0c0c0;"></div>
<div class="b" style="left:0px;top:646px;width:64px;height:1px;background:#c0c0c0;"></div>
<div class="b" style="left:0px;top:678px;width:64px;height:1px;background:#c0c0c0;"></div>
<div class="b" style="left:0px;top:710px;width:64px;height:1px;background:#c0c0c0;"></div>
<div class="b" style="left:0px;top:742px;width:64px;height:1px;background:#c0c0c0;"></div>
<div class="b" style="left:0px;top:774px;width:64px;height:1px;background:#c0c0c0;"></div>
<div class="b" style="left:0px;top:806px;width:64px;height:1px;background:#c0c0c0;"></div>
<div class="b" style="left:0px;top:838px;width:64px;height:1px;background:#c0c0c0;"></div>
<div class="b" style="left:0px;top:870px;width:64px;height:1px;background:#c0c0c0;"></div>
<div class="b" style="left:0px;top:902px;width:64px;height:1px;background:#c0c0c0;"></div>
<div class="b" style="left:0px;top:934px;width:64px;height:1px;background:#c0c0c0;"></div>
<div class="t" style="left:64px;top:340.84px;font-size:14.6px;line-height:19px;width:271px;text-align:center;color:#444746;">A</div>
<div class="t" style="left:336px;top:340.84px;font-size:14.6px;line-height:19px;width:363px;text-align:center;color:#444746;">B</div>
<div class="t" style="left:700px;top:340.84px;font-size:14.6px;line-height:19px;width:140px;text-align:center;color:#444746;">C</div>
<div class="t" style="left:841px;top:340.84px;font-size:14.6px;line-height:19px;width:140px;text-align:center;color:#444746;">D</div>
<div class="t" style="left:982px;top:340.84px;font-size:14.6px;line-height:19px;width:180px;text-align:center;color:#444746;">E</div>
<div class="t" style="left:1163px;top:340.84px;font-size:14.6px;line-height:19px;width:196px;text-align:center;color:#444746;">F</div>
<div class="t" style="left:1360px;top:340.84px;font-size:14.6px;line-height:19px;width:140px;text-align:center;color:#041e49;font-weight:bold;">G</div>
<div class="t" style="left:1501px;top:340.84px;font-size:14.6px;line-height:19px;width:140px;text-align:center;color:#444746;">H</div>
<div class="t" style="left:1642px;top:340.84px;font-size:14.6px;line-height:19px;width:140px;text-align:center;color:#444746;">I</div>
<div class="t" style="left:1783px;top:340.84px;font-size:14.6px;line-height:19px;width:140px;text-align:center;color:#444746;">J</div>
<div class="t" style="left:0px;top:378.04px;font-size:14.6px;line-height:19px;width:63px;text-align:center;color:#444746;">1</div>
<div class="t" style="left:0px;top:419.04px;font-size:14.6px;line-height:19px;width:63px;text-align:center;color:#444746;">2</div>
<div class="t" style="left:0px;top:460.04px;font-size:14.6px;line-height:19px;width:63px;text-align:center;color:#444746;">3</div>
<div class="t" style="left:0px;top:495.04px;font-size:14.6px;line-height:19px;width:63px;text-align:center;color:#444746;">4</div>
<div class="t" style="left:0px;top:524.04px;font-size:14.6px;line-height:19px;width:63px;text-align:center;color:#444746;">5</div>
<div class="t" style="left:0px;top:555.54px;font-size:14.6px;line-height:19px;width:63px;text-align:center;color:#444746;">6</div>
<div class="t" style="left:0px;top:588.54px;font-size:14.6px;line-height:19px;width:63px;text-align:center;color:#444746;">7</div>
<div class="t" style="left:0px;top:620.54px;font-size:14.6px;line-height:19px;width:63px;text-align:center;color:#444746;">8</div>
<div class="t" style="left:0px;top:652.54px;font-size:14.6px;line-height:19px;width:63px;text-align:center;color:#444746;">9</div>
<div class="t" style="left:0px;top:684.54px;font-size:14.6px;line-height:19px;width:63px;text-align:center;color:#444746;">10</div>
<div class="t" style="left:0px;top:716.54px;font-size:14.6px;line-height:19px;width:63px;text-align:center;color:#444746;">11</div>
<div class="t" style="left:0px;top:748.54px;font-size:14.6px;line-height:19px;width:63px;text-align:center;color:#444746;">12</div>
<div class="t" style="left:0px;top:780.54px;font-size:14.6px;line-height:19px;width:63px;text-align:center;color:#444746;">13</div>
<div class="t" style="left:0px;top:812.54px;font-size:14.6px;line-height:19px;width:63px;text-align:center;color:#444746;">14</div>
<div class="t" style="left:0px;top:844.54px;font-size:14.6px;line-height:19px;width:63px;text-align:center;color:#444746;">15</div>
<div class="t" style="left:0px;top:876.54px;font-size:14.6px;line-height:19px;width:63px;text-align:center;color:#444746;">16</div>
<div class="t" style="left:0px;top:908.54px;font-size:14.6px;line-height:19px;width:63px;text-align:center;color:#444746;">17</div>
<div class="t" style="left:0px;top:940.54px;font-size:14.6px;line-height:19px;width:63px;text-align:center;color:#444746;">18</div>
<div class="b" style="left:1906px;top:334px;width:13px;height:631px;background:#fff;"></div>
<div class="b" style="left:1906px;top:334px;width:13px;height:33px;background:#f8f9fa;"></div>
<div class="b" style="left:1907px;top:369px;width:14px;height:37px;background:#dadce0;border-radius:7px;"></div>
<div class="b" style="left:1905px;top:334px;width:1px;height:34px;background:#d9d9d9;"></div>
<div class="b" style="left:1906px;top:367px;width:13px;height:1px;background:#d9d9d9;"></div>
<div class="b" style="left:1906px;top:923px;width:13px;height:42px;background:#f8f9fa;"></div>
<div class="b" style="left:1906px;top:923px;width:13px;height:1px;background:#e1e1e1;"></div>
<div class="b" style="left:1906px;top:944px;width:13px;height:1px;background:#e1e1e1;"></div>
<svg class="b" style="left:1908.5px;top:929px;" width="9" height="6" viewBox="0 0 9 6"><path d="M0.5 5.5L4.5 1 8.5 5.5z" fill="#999"/></svg>
<svg class="b" style="left:1908.5px;top:953px;" width="9" height="6" viewBox="0 0 9 6"><path d="M0.5 0.5L4.5 5 8.5 0.5z" fill="#999"/></svg>
<div class="b" style="left:64px;top:368px;width:272px;height:40px;background:#6d9eeb;"></div>
<div class="b" style="left:64px;top:408px;width:272px;height:41px;background:#b7e1cd;"></div>
<div class="b" style="left:64px;top:449px;width:272px;height:42px;background:#8e7cc3;"></div>
<div class="b" style="left:64px;top:549px;width:1296px;height:34px;background:#ffe599;"></div>
<div class="b" style="left:64px;top:583px;width:272px;height:382px;background:#6d9eeb;"></div>
<div class="b" style="left:64px;top:367px;width:1842px;height:1px;background:rgba(0,0,0,0.118);"></div>
<div class="b" style="left:64px;top:408px;width:1842px;height:1px;background:rgba(0,0,0,0.118);"></div>
<div class="b" style="left:64px;top:449px;width:1842px;height:1px;background:rgba(0,0,0,0.118);"></div>
<div class="b" style="left:64px;top:490px;width:1842px;height:1px;background:rgba(0,0,0,0.118);"></div>
<div class="b" style="left:64px;top:519px;width:1842px;height:1px;background:rgba(0,0,0,0.118);"></div>
<div class="b" style="left:64px;top:548px;width:1842px;height:1px;background:rgba(0,0,0,0.118);"></div>
<div class="b" style="left:64px;top:582px;width:1842px;height:1px;background:rgba(0,0,0,0.118);"></div>
<div class="b" style="left:1360px;top:614px;width:546px;height:1px;background:rgba(0,0,0,0.118);"></div>
<div class="b" style="left:1360px;top:646px;width:546px;height:1px;background:rgba(0,0,0,0.118);"></div>
<div class="b" style="left:1360px;top:678px;width:546px;height:1px;background:rgba(0,0,0,0.118);"></div>
<div class="b" style="left:1360px;top:710px;width:546px;height:1px;background:rgba(0,0,0,0.118);"></div>
<div class="b" style="left:1360px;top:742px;width:546px;height:1px;background:rgba(0,0,0,0.118);"></div>
<div class="b" style="left:1360px;top:774px;width:546px;height:1px;background:rgba(0,0,0,0.118);"></div>
<div class="b" style="left:1360px;top:806px;width:546px;height:1px;background:rgba(0,0,0,0.118);"></div>
<div class="b" style="left:1360px;top:838px;width:546px;height:1px;background:rgba(0,0,0,0.118);"></div>
<div class="b" style="left:1360px;top:870px;width:546px;height:1px;background:rgba(0,0,0,0.118);"></div>
<div class="b" style="left:1360px;top:902px;width:546px;height:1px;background:rgba(0,0,0,0.118);"></div>
<div class="b" style="left:1360px;top:934px;width:546px;height:1px;background:rgba(0,0,0,0.118);"></div>
<div class="b" style="left:335px;top:368px;width:1px;height:597px;background:rgba(0,0,0,0.118);"></div>
<div class="b" style="left:699px;top:368px;width:1px;height:597px;background:rgba(0,0,0,0.118);"></div>
<div class="b" style="left:840px;top:368px;width:1px;height:597px;background:rgba(0,0,0,0.118);"></div>
<div class="b" style="left:981px;top:368px;width:1px;height:597px;background:rgba(0,0,0,0.118);"></div>
<div class="b" style="left:1162px;top:368px;width:1px;height:597px;background:rgba(0,0,0,0.118);"></div>
<div class="b" style="left:1359px;top:368px;width:1px;height:597px;background:rgba(0,0,0,0.118);"></div>
<div class="b" style="left:1500px;top:368px;width:1px;height:597px;background:rgba(0,0,0,0.118);"></div>
<div class="b" style="left:1641px;top:368px;width:1px;height:597px;background:rgba(0,0,0,0.118);"></div>
<div class="b" style="left:1782px;top:368px;width:1px;height:597px;background:rgba(0,0,0,0.118);"></div>
<div class="b" style="left:1905px;top:368px;width:1px;height:597px;background:#e1e1e1;"></div>
<div class="b" style="left:64px;top:548px;width:1296px;height:1px;background:#000;"></div>
<div class="b" style="left:64px;top:582px;width:1296px;height:1px;background:#000;"></div>
<div class="b" style="left:335px;top:548px;width:1px;height:417px;background:#000;"></div>
<div class="b" style="left:699px;top:548px;width:1px;height:417px;background:#000;"></div>
<div class="b" style="left:840px;top:548px;width:1px;height:417px;background:#000;"></div>
<div class="b" style="left:981px;top:548px;width:1px;height:417px;background:#000;"></div>
<div class="b" style="left:1162px;top:548px;width:1px;height:417px;background:#000;"></div>
<div class="b" style="left:1359px;top:548px;width:1px;height:417px;background:#000;"></div>
<div class="b" style="left:336px;top:614px;width:1024px;height:1px;background:#000;"></div>
<div class="b" style="left:336px;top:646px;width:1024px;height:1px;background:#000;"></div>
<div class="b" style="left:336px;top:678px;width:1024px;height:1px;background:#000;"></div>
<div class="b" style="left:336px;top:710px;width:1024px;height:1px;background:#000;"></div>
<div class="b" style="left:336px;top:742px;width:1024px;height:1px;background:#000;"></div>
<div class="b" style="left:336px;top:774px;width:1024px;height:1px;background:#000;"></div>
<div class="b" style="left:336px;top:806px;width:1024px;height:1px;background:#000;"></div>
<div class="b" style="left:336px;top:838px;width:1024px;height:1px;background:#000;"></div>
<div class="b" style="left:336px;top:870px;width:1024px;height:1px;background:#000;"></div>
<div class="b" style="left:336px;top:902px;width:1024px;height:1px;background:#000;"></div>
<div class="b" style="left:336px;top:934px;width:1024px;height:1px;background:#000;"></div>
<div id="cells" style="position:absolute;left:0;top:0;width:1919px;height:965px;overflow:hidden;"><div class="t" style="left:68px;top:371.82px;font-size:27.95px;line-height:36px;">Location</div>
<div class="t" style="left:68px;top:411.32px;font-size:27.95px;line-height:36px;">Targeted Keyword</div>
<div class="t" style="left:68px;top:454.32px;font-size:27.95px;line-height:36px;">KD Recherche Tool</div>
<div class="t" style="left:340.5px;top:379.95px;font-size:20.35px;line-height:26px;">Bangladesh</div>
<div class="t" style="left:340.5px;top:424.54px;font-size:18.63px;line-height:24px;">printer price in bd</div>
<div class="t" style="left:340.5px;top:461.95px;font-size:20.35px;line-height:26px;">ahrefs</div>
<div class="t" style="left:64px;top:551.74px;font-size:22.4px;line-height:29px;width:271px;text-align:center;">Servises Main Keyword</div>
<div class="t" style="left:336px;top:551.74px;font-size:22.4px;line-height:29px;width:363px;text-align:center;">Keyword Recherche</div>
<div class="t" style="left:700px;top:551.74px;font-size:22.4px;line-height:29px;width:140px;text-align:center;">Locatiion</div>
<div class="t" style="left:841px;top:551.74px;font-size:22.4px;line-height:29px;width:140px;text-align:center;">KD</div>
<div class="t" style="left:982px;top:551.74px;font-size:22.4px;line-height:29px;width:180px;text-align:center;">Search Volume</div>
<div class="t" style="left:1163px;top:551.74px;font-size:22.4px;line-height:29px;width:196px;text-align:center;">Keyword States</div>
<div class="t" style="left:340.5px;top:589.24px;font-size:18.63px;line-height:24px;">colour printer price in bd</div>
<div class="t" style="left:717.3px;top:584.63px;font-size:20.4px;line-height:27px;letter-spacing:0.018px;">bangladesh</div>
<div class="t" style="left:841px;top:585.15px;font-size:20.35px;line-height:26px;width:140px;text-align:center;">5</div>
<div class="t" style="left:982px;top:589.24px;font-size:18.63px;line-height:24px;width:180px;text-align:center;">1.0k</div>
<div class="t" style="left:1163px;top:589.24px;font-size:18.63px;line-height:24px;width:196px;text-align:center;">easy</div>
<div class="t" style="left:340.5px;top:621.24px;font-size:18.63px;line-height:24px;">portable printer price in bd</div>
<div class="t" style="left:717.3px;top:616.63px;font-size:20.4px;line-height:27px;letter-spacing:0.018px;">bangladesh</div>
<div class="t" style="left:841px;top:617.15px;font-size:20.35px;line-height:26px;width:140px;text-align:center;">0</div>
<div class="t" style="left:982px;top:621.24px;font-size:18.63px;line-height:24px;width:180px;text-align:center;">260</div>
<div class="t" style="left:1163px;top:621.24px;font-size:18.63px;line-height:24px;width:196px;text-align:center;">easy</div>
<div class="t" style="left:340.5px;top:653.19px;font-size:18.8px;line-height:24px;letter-spacing:0.586px;">black and white printer price in bd</div>
<div class="t" style="left:717.3px;top:648.63px;font-size:20.4px;line-height:27px;letter-spacing:0.018px;">bangladesh</div>
<div class="t" style="left:841px;top:649.15px;font-size:20.35px;line-height:26px;width:140px;text-align:center;">9</div>
<div class="t" style="left:982px;top:653.24px;font-size:18.63px;line-height:24px;width:180px;text-align:center;">260</div>
<div class="t" style="left:1163px;top:653.24px;font-size:18.63px;line-height:24px;width:196px;text-align:center;">easy</div>
<div class="t" style="left:340.5px;top:685.19px;font-size:18.8px;line-height:24px;letter-spacing:0.541px;">mini printer price in bd</div>
<div class="t" style="left:717.3px;top:680.63px;font-size:20.4px;line-height:27px;letter-spacing:0.018px;">bangladesh</div>
<div class="t" style="left:841px;top:681.15px;font-size:20.35px;line-height:26px;width:140px;text-align:center;">0</div>
<div class="t" style="left:982px;top:685.24px;font-size:18.63px;line-height:24px;width:180px;text-align:center;">170</div>
<div class="t" style="left:1163px;top:685.24px;font-size:18.63px;line-height:24px;width:196px;text-align:center;">easy</div>
<div class="t" style="left:340.5px;top:717.24px;font-size:18.63px;line-height:24px;">low budget printer price in bd</div>
<div class="t" style="left:717.3px;top:712.63px;font-size:20.4px;line-height:27px;letter-spacing:0.018px;">bangladesh</div>
<div class="t" style="left:841px;top:717.24px;font-size:18.63px;line-height:24px;width:140px;text-align:center;">2</div>
<div class="t" style="left:982px;top:717.24px;font-size:18.63px;line-height:24px;width:180px;text-align:center;">170</div>
<div class="t" style="left:1163px;top:717.24px;font-size:18.63px;line-height:24px;width:196px;text-align:center;">easy</div>
<div class="t" style="left:340.5px;top:749.24px;font-size:18.63px;line-height:24px;">3d printer price in bd</div>
<div class="t" style="left:717.3px;top:744.63px;font-size:20.4px;line-height:27px;letter-spacing:0.018px;">bangladesh</div>
<div class="t" style="left:841px;top:749.24px;font-size:18.63px;line-height:24px;width:140px;text-align:center;">0</div>
<div class="t" style="left:982px;top:749.24px;font-size:18.63px;line-height:24px;width:180px;text-align:center;">170</div>
<div class="t" style="left:1163px;top:749.24px;font-size:18.63px;line-height:24px;width:196px;text-align:center;">easy</div>
<div class="t" style="left:340.5px;top:781.24px;font-size:18.63px;line-height:24px;">portable printer price in bd</div>
<div class="t" style="left:717.3px;top:776.63px;font-size:20.4px;line-height:27px;letter-spacing:0.018px;">bangladesh</div>
<div class="t" style="left:841px;top:781.24px;font-size:18.63px;line-height:24px;width:140px;text-align:center;">0</div>
<div class="t" style="left:982px;top:781.24px;font-size:18.63px;line-height:24px;width:180px;text-align:center;">260</div>
<div class="t" style="left:1163px;top:781.24px;font-size:18.63px;line-height:24px;width:196px;text-align:center;">easy</div>
<div class="t" style="left:340.5px;top:813.19px;font-size:18.8px;line-height:24px;letter-spacing:0.553px;">scanner printer</div>
<div class="t" style="left:717.3px;top:808.63px;font-size:20.4px;line-height:27px;letter-spacing:0.018px;">bangladesh</div>
<div class="t" style="left:841px;top:813.24px;font-size:18.63px;line-height:24px;width:140px;text-align:center;">19</div>
<div class="t" style="left:982px;top:813.24px;font-size:18.63px;line-height:24px;width:180px;text-align:center;">260</div>
<div class="t" style="left:1163px;top:813.24px;font-size:18.63px;line-height:24px;width:196px;text-align:center;">medium</div>
<div class="t" style="left:340.5px;top:845.24px;font-size:18.63px;line-height:24px;">printer price</div>
<div class="t" style="left:717.3px;top:840.63px;font-size:20.4px;line-height:27px;letter-spacing:0.018px;">bangladesh</div>
<div class="t" style="left:841px;top:845.24px;font-size:18.63px;line-height:24px;width:140px;text-align:center;">7</div>
<div class="t" style="left:982px;top:845.24px;font-size:18.63px;line-height:24px;width:180px;text-align:center;">590</div>
<div class="t" style="left:1163px;top:845.24px;font-size:18.63px;line-height:24px;width:196px;text-align:center;">easy</div>
<div class="t" style="left:340.5px;top:877.24px;font-size:18.63px;line-height:24px;">used printer price in bd</div>
<div class="t" style="left:717.3px;top:872.63px;font-size:20.4px;line-height:27px;letter-spacing:0.018px;">bangladesh</div>
<div class="t" style="left:841px;top:877.24px;font-size:18.63px;line-height:24px;width:140px;text-align:center;">0</div>
<div class="t" style="left:982px;top:877.24px;font-size:18.63px;line-height:24px;width:180px;text-align:center;">100</div>
<div class="t" style="left:1163px;top:877.24px;font-size:18.63px;line-height:24px;width:196px;text-align:center;">easy</div>
<div class="t" style="left:340.5px;top:909.19px;font-size:18.8px;line-height:24px;letter-spacing:0.507px;">best printer in bangladesh</div>
<div class="t" style="left:717.3px;top:904.63px;font-size:20.4px;line-height:27px;letter-spacing:0.018px;">bangladesh</div>
<div class="t" style="left:841px;top:909.24px;font-size:18.63px;line-height:24px;width:140px;text-align:center;">5</div>
<div class="t" style="left:982px;top:909.24px;font-size:18.63px;line-height:24px;width:180px;text-align:center;">140</div>
<div class="t" style="left:1163px;top:909.24px;font-size:18.63px;line-height:24px;width:196px;text-align:center;">easy</div>
<div class="t" style="left:340.5px;top:941.24px;font-size:18.63px;line-height:24px;">printer price</div>
<div class="t" style="left:717.3px;top:936.63px;font-size:20.4px;line-height:27px;letter-spacing:0.018px;">bangladesh</div>
<div class="t" style="left:841px;top:941.24px;font-size:18.63px;line-height:24px;width:140px;text-align:center;">12</div>
<div class="t" style="left:982px;top:941.24px;font-size:18.63px;line-height:24px;width:180px;text-align:center;">4.4k</div>
<div class="t" style="left:1163px;top:941.24px;font-size:18.63px;line-height:24px;width:196px;text-align:center;">medium</div>
<div class="t" style="left:64px;top:914.54px;font-size:18.63px;line-height:24px;width:271px;text-align:center;">printer price in bd</div></div>
</div>
<div id="bottom">
<div class="b" style="left:0px;top:965px;width:1919px;height:18px;background:#fff;"></div>
<div class="b" style="left:0px;top:965px;width:1919px;height:1px;background:#e1e1e1;"></div>
<div class="b" style="left:0px;top:966px;width:63px;height:16px;background:#f8f9fa;"></div>
<div class="b" style="left:63px;top:966px;width:1px;height:16px;background:#c0c0c0;"></div>
<div class="b" style="left:66px;top:967px;width:802px;height:13px;background:#dadce0;border-radius:6.5px;"></div>
<div class="b" style="left:1863px;top:966px;width:43px;height:15px;background:#f8f9fa;"></div>
<div class="b" style="left:1863px;top:966px;width:1px;height:16px;background:#e1e1e1;"></div>
<div class="b" style="left:1884px;top:966px;width:1px;height:16px;background:#e1e1e1;"></div>
<div class="b" style="left:1905px;top:966px;width:1px;height:16px;background:#e1e1e1;"></div>
<svg class="b" style="left:1870px;top:969px;" width="6" height="9" viewBox="0 0 6 9"><path d="M5.5 0.5L1 4.5 5.5 8.5z" fill="#999"/></svg>
<svg class="b" style="left:1893px;top:969px;" width="6" height="9" viewBox="0 0 6 9"><path d="M0.5 0.5L5 4.5 0.5 8.5z" fill="#999"/></svg>
<div class="b" style="left:0px;top:982px;width:1919px;height:50px;background:#f9fbfd;"></div>
<div class="b" style="left:0px;top:982px;width:1919px;height:1px;background:#e4e6e8;"></div>
<div class="b" style="left:78.5px;top:1007.1px;width:14.5px;height:2.3px;background:#444746;"></div>
<div class="b" style="left:84.6px;top:1001px;width:2.3px;height:14.5px;background:#444746;"></div>
<div class="b" style="left:130.8px;top:1001.8px;width:20px;height:2.3px;background:#444746;"></div>
<div class="b" style="left:130.8px;top:1007.1px;width:20px;height:2.3px;background:#444746;"></div>
<div class="b" style="left:130.8px;top:1012.4px;width:20px;height:2.3px;background:#444746;"></div>
<div class="b" style="left:185px;top:983px;width:125.8px;height:49px;background:#e1e9f7;"></div>
<div class="t" style="left:202px;top:994.29px;font-size:20.8px;line-height:27px;color:#0b57d0;letter-spacing:0.175px;-webkit-text-stroke:0.7px #0b57d0;">Sheet1</div>
<svg class="b" style="left:284.5px;top:1006.2px;" width="10.8" height="5.8" viewBox="0 0 10.8 5.8"><path d="M0 0H10.8L5.4 5.6z" fill="#0b57d0"/></svg>
<div class="t" style="left:328px;top:994.29px;font-size:20.8px;line-height:27px;color:#444746;letter-spacing:0.115px;-webkit-text-stroke:0.4px #444746;">Sheet2</div>
<svg class="b" style="left:410.5px;top:1006.2px;" width="10.8" height="5.8" viewBox="0 0 10.8 5.8"><path d="M0 0H10.8L5.4 5.6z" fill="#444746"/></svg>
<svg class="b" style="left:1877px;top:1004px;" width="10" height="15" viewBox="0 0 10 15"><path d="M8.5 1.2L2 7.5 8.5 13.8" fill="none" stroke="#444746" stroke-width="2.1"/></svg>
<div class="b" style="left:0px;top:1032px;width:1919px;height:47px;background:linear-gradient(90deg,#1b2929 0px,#1c2927 130px,#1c2a1a 180px,#1b2c15 250px,#1c2b15 400px,#1f2a15 450px,#262716 480px,#2d2319 500px,#33201c 530px,#34201b 650px,#3b2119 780px,#46191b 900px,#49181c 1000px,#43191d 1100px,#3a1a1e 1250px,#2e1c1c 1390px,#32201a 1440px,#302417 1480px,#2a2716 1520px,#212a15 1580px,#1f2a17 1620px,#222918 1750px,#262717 1830px,#1f2a1a 1919px);"></div>
<svg class="b" style="left:18px;top:1042px;" width="26" height="25" viewBox="0 0 26 25"><defs><linearGradient id="wc" x1="0" y1="0" x2="0" y2="1"><stop offset="0" stop-color="#c4d8f7"/><stop offset="0.6" stop-color="#a9c6f2"/><stop offset="1" stop-color="#7ba5e8"/></linearGradient><mask id="wm"><rect x="-2" y="-2" width="30" height="30" fill="#fff"/><circle cx="5.6" cy="4.2" r="6.8" fill="#000"/></mask></defs><circle cx="8.6" cy="8.2" r="7.4" fill="#f7a51f" mask="url(#wm)"/><path d="M5.8 23.8a4.9 4.9 0 0 1-.700-9.75 5.9 5.9 0 0 1 10.4-3.35A5.4 5.4 0 0 1 21.6 14.4 4.8 4.8 0 0 1 20.4 23.8z" fill="url(#wc)"/><path d="M4 17.5c2-1.8 5-1.5 6.5.300 1.5-1.8 4.5-2 6.5-.300" fill="none" stroke="#e4eefc" stroke-width="1.2" opacity="0.7"/></svg>
<div class="t" style="left:50.3px;top:1040.00px;font-size:12.4px;line-height:16px;color:#fff;letter-spacing:-0.942px;">68°F</div>
<div class="t" style="left:50px;top:1056.00px;font-size:12.4px;line-height:16px;color:#d4d4d4;letter-spacing:0.074px;">Mostly cloudy</div>
<svg class="b" style="left:529px;top:1045px;" width="23.5" height="23" viewBox="0 0 23.5 23"><defs><linearGradient id="wg" x1="0" y1="0" x2="1" y2="1"><stop offset="0" stop-color="#6fd6ff"/><stop offset="1" stop-color="#1c9ef0"/></linearGradient></defs><rect x="0" y="0" width="11" height="10.8" rx="1" fill="url(#wg)"/><rect x="12.3" y="0" width="11" height="10.8" rx="1" fill="url(#wg)"/><rect x="0" y="12.1" width="11" height="10.8" rx="1" fill="url(#wg)"/><rect x="12.3" y="12.1" width="11" height="10.8" rx="1" fill="url(#wg)"/></svg>
<div class="b" style="left:565px;top:1040px;width:220px;height:32px;background:rgba(255,255,255,0.13);border-radius:16px;box-shadow:inset 0 0 0 1px rgba(255,255,255,0.06);"></div>
<svg class="b" style="left:576px;top:1048px;" width="16" height="16" viewBox="0 0 16 16"><circle cx="6.6" cy="6.6" r="5.4" fill="none" stroke="#fff" stroke-width="1.5"/><path d="M10.6 10.6L15 15" stroke="#fff" stroke-width="1.6"/></svg>
<div class="t" style="left:602.3px;top:1047.85px;font-size:14.3px;line-height:19px;color:#e8e4e4;letter-spacing:-0.182px;">Search</div>
<svg class="b" style="left:733px;top:1042px;" width="46" height="26" viewBox="0 0 46 26"><defs><radialGradient id="lg" cx="0.62" cy="0.45" r="0.6"><stop offset="0" stop-color="#4a2f7a" stop-opacity="0.85"/><stop offset="1" stop-color="#4a2f7a" stop-opacity="0"/></radialGradient></defs><rect x="0" y="0" width="46" height="26" fill="url(#lg)"/><rect x="3" y="10.5" width="8" height="11" rx="2.5" fill="#f7b488"/><rect x="4" y="17" width="6" height="4" rx="1.5" fill="#ffd9b0"/><rect x="14.5" y="4.5" width="4" height="6" rx="1.3" fill="#f5a978"/><rect x="21" y="11" width="3.2" height="4" rx="1" fill="#f2a070"/><rect x="27" y="8" width="2" height="2.5" rx="0.8" fill="#f2a070"/><rect x="32" y="3.5" width="10" height="14.5" rx="3" fill="#f9b78a"/><rect x="33.5" y="12" width="7" height="5" rx="2" fill="#ffd9b0"/></svg>
<svg class="b" style="left:796px;top:1042.5px;" width="26" height="26" viewBox="0 0 26 26"><defs><linearGradient id="cp" x1="0" y1="0" x2="1" y2="1"><stop offset="0" stop-color="#2a7fe8"/><stop offset="0.35" stop-color="#37c6d0"/><stop offset="0.6" stop-color="#f5c84c"/><stop offset="0.8" stop-color="#f2674e"/><stop offset="1" stop-color="#b24be0"/></linearGradient></defs><path d="M8 2h7.5c1.6 0 2.8 1 3.3 2.5l.7 2.5H22c2.6 0 4 2.4 3.3 4.8l-2.3 8c-.6 2-2.3 3.2-4.3 3.2H10.5c-1.6 0-2.8-1-3.3-2.5l-.7-2.5H4c-2.6 0-4-2.4-3.3-4.8l2.3-8C3.6 3.2 5.6 2 8 2z" fill="url(#cp)"/><path d="M10.3 8.5h6l-2 9h-6z" fill="#2a1f2a" opacity="0.55"/></svg>
<svg class="b" style="left:839.7px;top:1042px;" width="26" height="26" viewBox="0 0 26 26"><defs><linearGradient id="eg" x1="0" y1="0" x2="1" y2="1"><stop offset="0" stop-color="#35c1f1"/><stop offset="0.5" stop-color="#1b7fd8"/><stop offset="1" stop-color="#2fcf6e"/></linearGradient></defs><circle cx="13" cy="13" r="12.3" fill="url(#eg)"/><path d="M5 15.5c0-5 4-8.5 9-8.5 5.5 0 9 3.5 9 7.2 0 2.6-2 4.3-4.5 4.3-2 0-3.2-.8-3.2-1.8 0-.8.9-1.2.9-2.6 0-1.8-1.5-3.2-3.6-3.2-3 0-5 2.5-5 5.6 0 2.3.8 4.4 2.4 6C7 21.5 5 19 5 15.5z" fill="#0c4fa0" opacity="0.75"/><path d="M1 12C2 5.5 7 1.5 13 1.5c6 0 11 4 11.5 10.5-1.5-3.3-5-5.5-10-5.5S3 8.5 1 12z" fill="#5fe0c0" opacity="0.35"/></svg>
<svg class="b" style="left:883.7px;top:1043px;" width="26" height="26" viewBox="0 0 26 26"><path d="M1 5a2 2 0 0 1 2-2h6.5l2.5 3H23a2 2 0 0 1 2 2v2H1z" fill="#e8a51d"/><path d="M1 8h24v13a2 2 0 0 1-2 2H3a2 2 0 0 1-2-2z" fill="#fcd04b"/><path d="M7.5 17.5h11v5.5h-11z" fill="#2b87d8"/><path d="M9.5 17.5h7v2.4h-7z" fill="#1a5fae"/></svg>
<svg class="b" style="left:927px;top:1043px;" width="26" height="26" viewBox="0 0 26 26"><path d="M8.5 6.5V4.2A2.2 2.2 0 0 1 10.7 2h4.6a2.2 2.2 0 0 1 2.2 2.2v2.3" fill="none" stroke="#3db4f0" stroke-width="1.8"/><path d="M2.5 6.5h21v14a3 3 0 0 1-3 3h-15a3 3 0 0 1-3-3z" fill="#f4f4f6"/><rect x="8.3" y="10" width="4.3" height="4.3" fill="#f25022"/><rect x="13.4" y="10" width="4.3" height="4.3" fill="#7fba00"/><rect x="8.3" y="15.1" width="4.3" height="4.3" fill="#00a4ef"/><rect x="13.4" y="15.1" width="4.3" height="4.3" fill="#ffb900"/></svg>
<svg class="b" style="left:971.3px;top:1043px;" width="26" height="26" viewBox="0 0 26 26"><path d="M9 4.5l8-3 8 5v12.5a2 2 0 0 1-2 2H9z" fill="#1e90e6"/><path d="M9 12l8 5 8-5v7a2 2 0 0 1-2 2H9z" fill="#35b8f5"/><path d="M17 1.5l8 5-8 5z" fill="#0f6cbd"/><rect x="1" y="7" width="13.5" height="13.5" rx="1.8" fill="#0f63b8"/><text x="7.75" y="18" font-family="Liberation Sans,sans-serif" font-size="11" font-weight="bold" text-anchor="middle" fill="#fff">O</text></svg>
<div class="b" style="left:1009px;top:1036px;width:39.5px;height:40px;background:rgba(255,255,255,0.08);border-radius:5px;box-shadow:inset 0 0 0 1px rgba(255,255,255,0.05);"></div>
<svg class="b" style="left:1015px;top:1042.5px;" width="26" height="26" viewBox="0 0 26 26"><circle cx="13" cy="13" r="12" fill="#fff"/><path d="M13 1a12 12 0 0 1 10.4 6H13a6 6 0 0 0-5.2 3L3.4 5.8A12 12 0 0 1 13 1z" fill="#ea4335"/><path d="M23.4 7A12 12 0 0 1 12.4 25l5.8-9a6 6 0 0 0 0-6z" fill="#fbbc04"/><path d="M12.4 25A12 12 0 0 1 3.4 5.8L7.8 16a6 6 0 0 0 7.4 2.6z" fill="#34a853"/><circle cx="13" cy="13" r="5.4" fill="#fff"/><circle cx="13" cy="13" r="4.3" fill="#4285f4"/></svg>
<svg class="b" style="left:1032px;top:1039px;" width="15" height="15" viewBox="0 0 100 100"><defs><clipPath id="ca3"><circle cx="50" cy="50" r="50"/></clipPath><filter id="fa3" x="-10%" y="-10%" width="120%" height="120%"><feGaussianBlur stdDeviation="1.6"/></filter></defs><g clip-path="url(#ca3)"><g filter="url(#fa3)"><rect x="-5" y="-5" width="110" height="110" fill="#b2c06a"/><rect x="-5" y="-5" width="110" height="38" fill="#c3ab86"/><path d="M40 -5H105V30H75z" fill="#9db87d"/><rect x="-5" y="26" width="110" height="12" fill="#c4b07c"/><rect x="-5" y="38" width="110" height="34" fill="#b3c765"/><rect x="-5" y="70" width="110" height="35" fill="#a9b574"/><rect x="88" y="22" width="5" height="75" fill="#b8936a"/><rect x="2" y="42" width="30" height="4" fill="#c9b8c9"/><path d="M39 45L63 44 76 70 73 78 66 105H24L22 82 4 70 20 58z" fill="#7db3cc"/><path d="M28 88H68L66 105H26z" fill="#86c3e0"/><path d="M62 82H70L68 105H60z" fill="#8d8f96"/><ellipse cx="51.5" cy="27" rx="9.5" ry="9" fill="#3a282b"/><ellipse cx="52.5" cy="34" rx="6.2" ry="8.5" fill="#c8957c"/><path d="M45 30C42 40 44 48 37 60" fill="none" stroke="#1f1718" stroke-width="5.5" stroke-linecap="round"/><path d="M47 45H58L55 52H50z" fill="#b98772"/></g></g></svg>
<div class="b" style="left:1021px;top:1072px;width:16px;height:3px;background:#c6c0f5;border-radius:1.5px;"></div>
<svg class="b" style="left:1059.3px;top:1042px;" width="26" height="26" viewBox="0 0 26 26"><defs><radialGradient id="ff" cx="0.6" cy="0.25" r="0.9"><stop offset="0" stop-color="#ffe14d"/><stop offset="0.4" stop-color="#ff9a1f"/><stop offset="0.8" stop-color="#ff3d4f"/><stop offset="1" stop-color="#c9207a"/></radialGradient></defs><path d="M13 2.5c1.5-1 2.5-1.5 3.5-2 0 2 1 3.5 3 5 3 2.5 5 5 5 9A11.5 11.5 0 0 1 1.5 14.5C1.5 10 3.5 7 6 5.5c0 1.2.3 2 1 2.8C8.5 6 10.5 4 13 2.5z" fill="url(#ff)"/><circle cx="12.5" cy="14.5" r="5.8" fill="#7a3fd6"/><path d="M7.5 12c1.5-1.5 4-2 6-1 2 .9 3 3 2.5 5-1-1.5-3-2-5-1.5-1.6.4-3 .2-3.5-2.5z" fill="#ff9a1f"/></svg>
<svg class="b" style="left:1103.7px;top:1043px;" width="26" height="26" viewBox="0 0 26 26"><rect x="7" y="2.5" width="18" height="21" rx="1.8" fill="#2b7cd3"/><rect x="7" y="2.5" width="18" height="7" rx="1.8" fill="#41a5ee"/><rect x="7" y="16.5" width="18" height="7" rx="1.8" fill="#185abd"/><rect x="1" y="6.5" width="13.5" height="13.5" rx="1.6" fill="#185abd"/><text x="7.75" y="17.4" font-family="Liberation Sans,sans-serif" font-size="11" font-weight="bold" text-anchor="middle" fill="#fff">W</text></svg>
<svg class="b" style="left:1147.7px;top:1042px;" width="26" height="26" viewBox="0 0 26 26"><circle cx="14.5" cy="13" r="11.5" fill="#ed6c47"/><path d="M14.5 1.5A11.5 11.5 0 0 1 26 13H14.5z" fill="#ff8f6b"/><path d="M14.5 24.5A11.5 11.5 0 0 0 26 13H14.5z" fill="#d35230"/><rect x="1" y="6.5" width="13.5" height="13.5" rx="1.6" fill="#c43e1c"/><text x="7.75" y="17.4" font-family="Liberation Sans,sans-serif" font-size="11" font-weight="bold" text-anchor="middle" fill="#fff">P</text></svg>
<svg class="b" style="left:1192px;top:1043px;" width="26" height="26" viewBox="0 0 26 26"><rect x="7" y="2.5" width="18" height="21" rx="1.8" fill="#21a366"/><rect x="7" y="2.5" width="18" height="7" rx="1.8" fill="#33c481"/><rect x="7" y="16.5" width="18" height="7" rx="1.8" fill="#107c41"/><rect x="1" y="6.5" width="13.5" height="13.5" rx="1.6" fill="#107c41"/><text x="7.75" y="17.4" font-family="Liberation Sans,sans-serif" font-size="11" font-weight="bold" text-anchor="middle" fill="#fff">X</text></svg>
<div class="b" style="left:1237.7px;top:1045px;width:21.6px;height:21px;background:#330000;border-radius:4px;"></div>
<div class="t" style="left:1237.7px;top:1048.47px;font-size:12.5px;line-height:16px;width:21.6px;text-align:center;color:#ff9a00;font-weight:bold;">Ai</div>
<div class="b" style="left:1281.7px;top:1045px;width:21.6px;height:21px;background:#001e36;border-radius:4px;"></div>
<div class="t" style="left:1281.7px;top:1048.47px;font-size:12.5px;line-height:16px;width:21.6px;text-align:center;color:#31a8ff;font-weight:bold;">Ps</div>
<svg class="b" style="left:1323.7px;top:1043px;" width="26" height="26" viewBox="0 0 26 26"><circle cx="21" cy="7" r="3" fill="#5059c9"/><rect x="17" y="10.5" width="8.5" height="10" rx="3" fill="#5059c9"/><circle cx="14.5" cy="5.5" r="4" fill="#7b83eb"/><rect x="8" y="10.5" width="13.5" height="13.5" rx="3.5" fill="#7b83eb"/><rect x="1" y="6.5" width="13.5" height="13.5" rx="1.6" fill="#4b53bc"/><rect x="1" y="6.5" width="13.5" height="13.5" rx="1.6" fill="#f5f5fb"/><text x="7.75" y="17.4" font-family="Liberation Sans,sans-serif" font-size="11" font-weight="bold" text-anchor="middle" fill="#4b53bc">T</text></svg>
<svg class="b" style="left:1367.7px;top:1042.5px;" width="26" height="26" viewBox="0 0 26 26"><circle cx="13" cy="13" r="12" fill="#fff"/><path d="M13 1a12 12 0 0 1 10.4 6H13a6 6 0 0 0-5.2 3L3.4 5.8A12 12 0 0 1 13 1z" fill="#ea4335"/><path d="M23.4 7A12 12 0 0 1 12.4 25l5.8-9a6 6 0 0 0 0-6z" fill="#fbbc04"/><path d="M12.4 25A12 12 0 0 1 3.4 5.8L7.8 16a6 6 0 0 0 7.4 2.6z" fill="#34a853"/><circle cx="13" cy="13" r="5.4" fill="#fff"/><circle cx="13" cy="13" r="4.3" fill="#4285f4"/></svg>
<div class="b" style="left:1381.5px;top:1039px;width:15px;height:15px;background:#2a1c1c;border-radius:50%;"></div>
<svg class="b" style="left:1384px;top:1041px;" width="10" height="11" viewBox="0 0 10 11"><circle cx="5" cy="3" r="2.2" fill="#fff"/><path d="M0.5 10.5c0-3 2-4.5 4.5-4.5s4.5 1.5 4.5 4.5z" fill="#fff"/></svg>
<div class="b" style="left:1378px;top:1072px;width:6px;height:3px;background:#9a9a9a;border-radius:1.5px;"></div>
<svg class="b" style="left:1696px;top:1052px;" width="12" height="8" viewBox="0 0 12 8"><path d="M1 7L6 2l5 5" fill="none" stroke="#fff" stroke-width="1.5"/></svg>
<svg class="b" style="left:1725px;top:1047px;" width="18" height="18" viewBox="0 0 18 18"><path d="M2.5 8.5A6.5 6.5 0 0 1 14 5M15.5 9.5A6.5 6.5 0 0 1 4 13" fill="none" stroke="#fff" stroke-width="1.2"/><path d="M14.2 1.5V5.2H10.5M3.8 16.5V12.8H7.5" fill="none" stroke="#fff" stroke-width="1.2"/><circle cx="12.8" cy="13.3" r="4" fill="#ff9800"/></svg>
<svg class="b" style="left:1757px;top:1049px;" width="18" height="13" viewBox="0 0 18 13"><path d="M1 4.6a11.5 11.5 0 0 1 16 0M3.6 7.4a7.8 7.8 0 0 1 10.8 0M6.2 10a4.1 4.1 0 0 1 5.6 0" fill="none" stroke="#fff" stroke-width="1.4"/><circle cx="9" cy="11.7" r="1.2" fill="#fff"/></svg>
<svg class="b" style="left:1781px;top:1048.5px;" width="18" height="15" viewBox="0 0 18 15"><path d="M1 5h2.6L7.2 1.5v12L3.6 10H1z" fill="none" stroke="#fff" stroke-width="1.2" stroke-linejoin="round"/><path d="M9.6 5a3.5 3.5 0 0 1 0 5M12 3a6.3 6.3 0 0 1 0 9M14.4 1a9.2 9.2 0 0 1 0 13" fill="none" stroke="#fff" stroke-width="1.2"/></svg>
<div class="t" style="left:1827.3px;top:1040.00px;font-size:12.4px;line-height:16px;color:#fff;letter-spacing:-0.379px;">11:47 PM</div>
<div class="t" style="left:1815px;top:1056.00px;font-size:12.4px;line-height:16px;color:#fff;letter-spacing:0.073px;">11/16/2024</div>
<svg class="b" style="left:1884.5px;top:1048.5px;" width="15" height="16" viewBox="0 0 15 16"><path d="M7.5 0.5a4.8 4.8 0 0 1 4.8 4.8v3.5l1.9 3.4H0.8l1.9-3.4V5.3A4.8 4.8 0 0 1 7.5 0.5z" fill="#c8c2f2"/><path d="M5.3 13.4h4.4a2.2 2.2 0 0 1-4.4 0z" fill="#c8c2f2"/></svg>
</div>
</body></html>
